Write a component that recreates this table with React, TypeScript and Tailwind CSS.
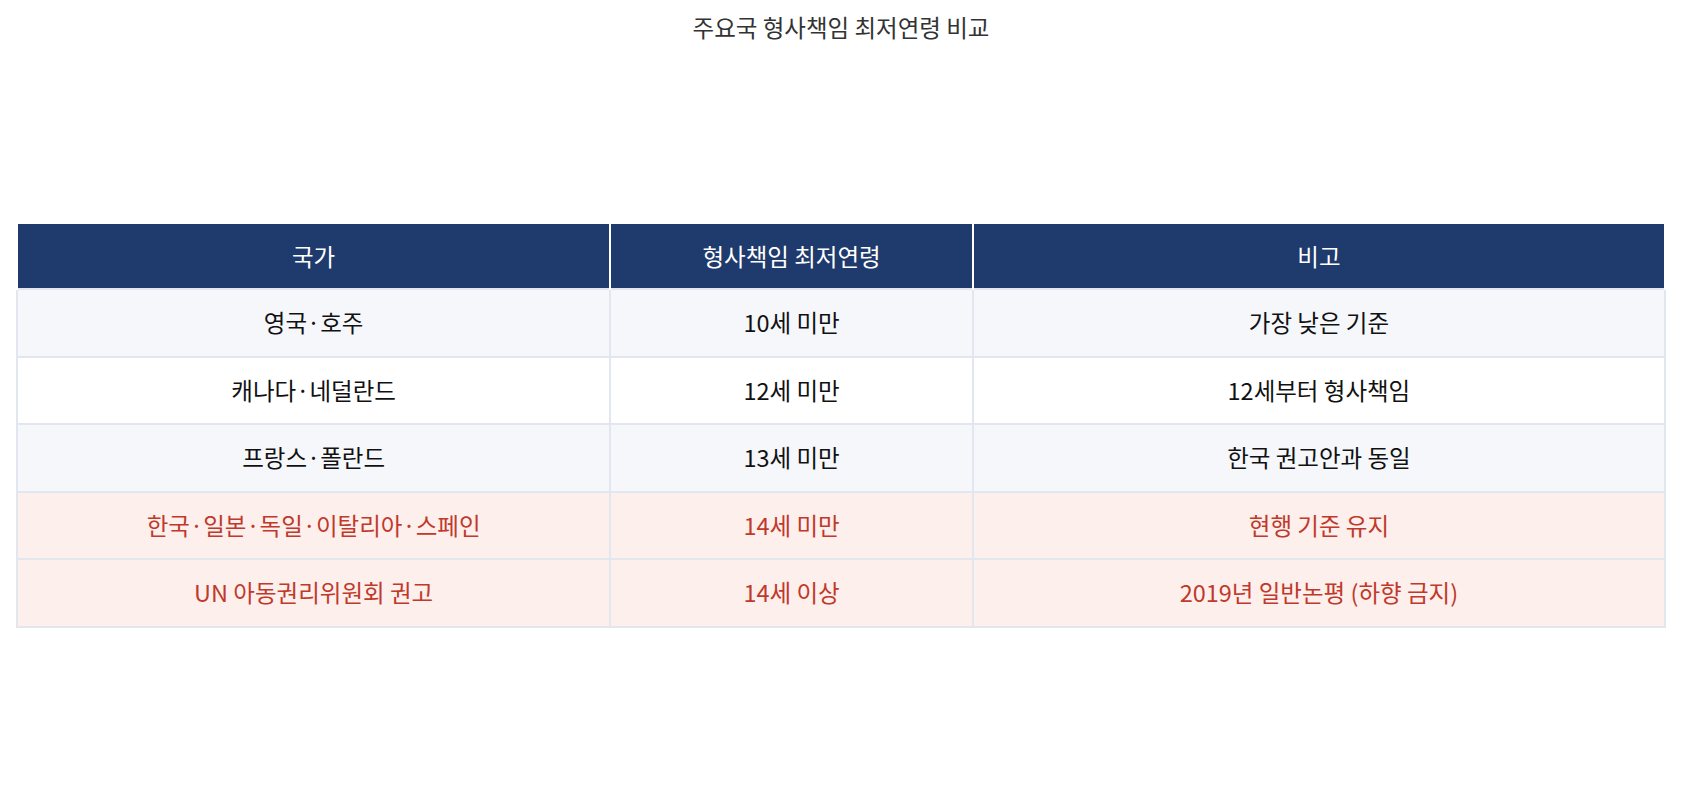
const rows = [
  { country: '영국·호주', age: '10세 미만', note: '가장 낮은 기준', tone: 'odd' },
  { country: '캐나다·네덜란드', age: '12세 미만', note: '12세부터 형사책임', tone: 'even' },
  { country: '프랑스·폴란드', age: '13세 미만', note: '한국 권고안과 동일', tone: 'odd' },
  { country: '한국·일본·독일·이탈리아·스페인', age: '14세 미만', note: '현행 기준 유지', tone: 'red' },
  { country: 'UN 아동권리위원회 권고', age: '14세 이상', note: '2019년 일반논평 (하향 금지)', tone: 'red' },
]

const rowClass: Record<string, string> = {
  odd: 'bg-[#f5f7fb] text-[#111111]',
  even: 'bg-white text-[#111111]',
  red: 'bg-[#fdefec] text-[#c0392b]',
}

export default function App() {
  return (
    <div
      className="h-screen flex flex-col bg-white"
      style={{ fontFamily: '"Noto Sans CJK KR", "Noto Sans", sans-serif' }}
    >
      <h1 className="pt-[11px] pb-[9px] text-center text-[23.5px] leading-[32px] text-[#333333]">
        주요국 형사책임 최저연령 비교
      </h1>
      <div className="flex-1 flex items-center px-4">
        <table className="w-full border-collapse table-fixed text-[23.5px]">
          <colgroup>
            <col className="w-[36%]" />
            <col className="w-[22%]" />
            <col className="w-[42%]" />
          </colgroup>
          <thead>
            <tr className="bg-[#1f3a6c] text-white">
              <th className="h-[66px] font-normal border-2 border-b-0 border-white">국가</th>
              <th className="h-[66px] font-normal border-2 border-b-0 border-white">형사책임 최저연령</th>
              <th className="h-[66px] font-normal border-2 border-b-0 border-white">비고</th>
            </tr>
          </thead>
          <tbody>
            {rows.map((r) => (
              <tr key={r.country} className={rowClass[r.tone]}>
                <td className="h-[67.5px] text-center border-2 border-[#e2e6ee]">{r.country}</td>
                <td className="h-[67.5px] text-center border-2 border-[#e2e6ee]">{r.age}</td>
                <td className="h-[67.5px] text-center border-2 border-[#e2e6ee]">{r.note}</td>
              </tr>
            ))}
          </tbody>
        </table>
      </div>
    </div>
  )
}
